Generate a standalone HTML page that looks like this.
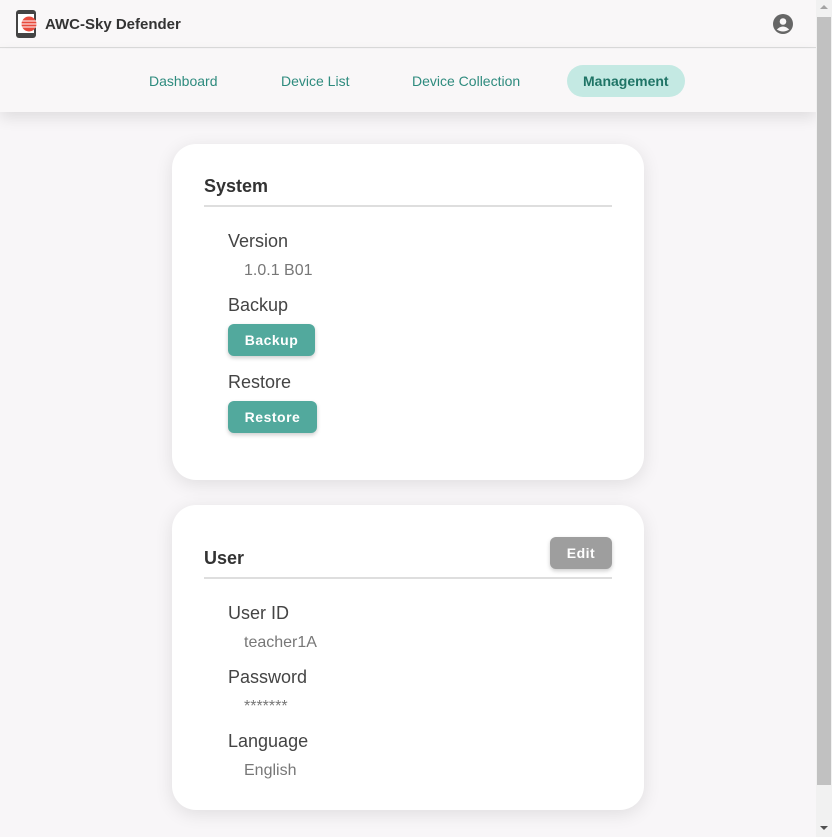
<!DOCTYPE html>
<html><head><meta charset="utf-8"><style>
*{box-sizing:border-box;margin:0;padding:0}
body{width:832px;height:837px;overflow:hidden;background:#f8f6f8;font-family:"Liberation Sans",sans-serif;position:relative}
.top{position:absolute;left:0;top:0;width:816px;height:48px;background:#f9f7f8;border-bottom:1px solid #dcdcdc}
.nav{position:absolute;left:0;top:49px;width:816px;height:63px;background:#f9f7f8;box-shadow:0 6px 14px rgba(0,0,0,.1)}
.nav span{position:absolute;top:16px;height:32px;line-height:32px;font-size:14px;color:#2e8b7e}
.nav .act{background:#c4e9e3;border-radius:16px;padding:0 16px;font-weight:bold;color:#1f7466}
.card{position:absolute;left:172px;width:472px;background:#fff;border-radius:24px;box-shadow:0 4px 18px rgba(0,0,0,.1)}
.h{position:absolute;left:32px;font-size:18px;font-weight:bold;color:#333}
.line{position:absolute;left:32px;width:408px;height:2px;background:#dedede}
.l{position:absolute;left:56px;font-size:18px;color:#444}
.v{position:absolute;left:72px;font-size:16px;color:#777}
.btn{position:absolute;height:32px;line-height:32px;background:#52a99d;color:#fff;font-size:14px;font-weight:bold;border-radius:6px;text-align:center;letter-spacing:.5px;box-shadow:0 2px 4px rgba(0,0,0,.2)}
.sb{position:absolute;left:816px;top:0;width:16px;height:837px;background:#f1f1f1}
.th{position:absolute;left:817px;top:17px;width:14px;height:768px;background:#c1c1c1}
</style></head><body>
<div class="top">
<svg style="position:absolute;left:15px;top:9px" width="24" height="30" viewBox="0 0 24 30">
<rect x="1" y="1" width="20" height="28" rx="3" fill="#444"/><rect x="3" y="5" width="16" height="19" fill="#fff"/>
<circle cx="14" cy="15" r="7.5" fill="#e84a3c"/>
<g stroke="#fff" stroke-width="1"><line x1="6" y1="12" x2="22" y2="12"/><line x1="6" y1="15" x2="22" y2="15"/><line x1="6" y1="18" x2="22" y2="18"/></g>
</svg>
<div style="position:absolute;left:45px;top:16px;font-size:15px;font-weight:bold;color:#333">AWC-Sky Defender</div>
<svg style="position:absolute;left:773px;top:14px" width="20" height="20" viewBox="0 0 20 20"><circle cx="10" cy="10" r="10" fill="#666"/><circle cx="10" cy="7.5" r="3.3" fill="#f9f7f8"/><path d="M3.8 15.5 Q10 9.5 16.2 15.5 Q10 19.5 3.8 15.5Z" fill="#f9f7f8"/></svg>
</div>
<div class="nav">
<span style="left:149px">Dashboard</span>
<span style="left:281px">Device List</span>
<span style="left:412px">Device Collection</span>
<span class="act" style="left:567px">Management</span>
</div>
<div class="card" style="top:144px;height:336px">
<div class="h" style="top:32px">System</div>
<div class="line" style="top:61px"></div>
<div class="l" style="top:87px">Version</div>
<div class="v" style="top:118px">1.0.1 B01</div>
<div class="l" style="top:151px">Backup</div>
<div class="btn" style="left:56px;top:180px;width:87px">Backup</div>
<div class="l" style="top:228px">Restore</div>
<div class="btn" style="left:56px;top:257px;width:89px">Restore</div>
</div>
<div class="card" style="top:505px;height:305px">
<div class="h" style="top:43px">User</div>
<div class="btn" style="left:378px;top:32px;width:62px;background:#9e9e9e">Edit</div>
<div class="line" style="top:72px"></div>
<div class="l" style="top:98px">User ID</div>
<div class="v" style="top:129px">teacher1A</div>
<div class="l" style="top:162px">Password</div>
<div class="v" style="top:193px">*******</div>
<div class="l" style="top:226px">Language</div>
<div class="v" style="top:257px">English</div>
</div>
<div class="sb"></div><div class="th"></div>
<div style="position:absolute;left:820px;top:5px;border:4px solid transparent;border-bottom:4px solid #a3a3a3;border-top:0"></div>
<div style="position:absolute;left:820px;top:826px;border:4px solid transparent;border-top:4px solid #505050;border-bottom:0"></div>
</body></html>
